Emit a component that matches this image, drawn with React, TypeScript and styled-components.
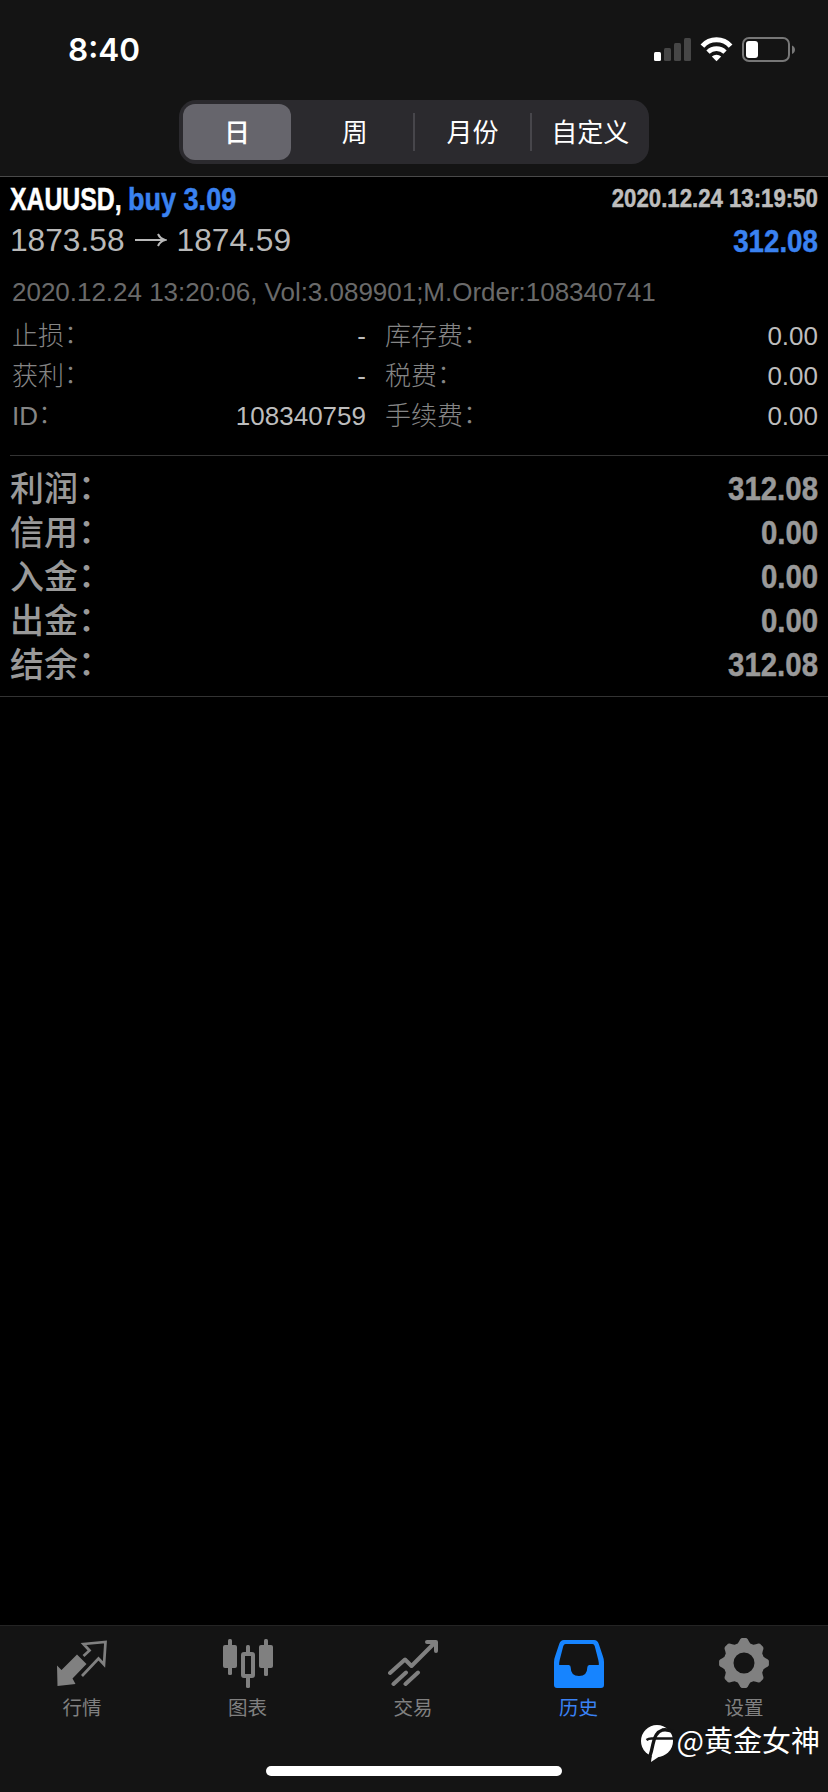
import React from "react";
import styled, { createGlobalStyle, css } from "styled-components";

const sans = `"Liberation Sans", "Noto Sans CJK SC", sans-serif`;
const cjk = `"Noto Sans CJK SC", sans-serif`;

const GlobalStyle = createGlobalStyle`
  * { box-sizing: border-box; }
  body { margin: 0; background: #000; }
`;

const Screen = styled.div`
  display: flex;
  flex-direction: column;
  width: 828px;
  height: 1792px;
  background: #000;
  overflow: hidden;
  white-space: nowrap;
`;

const Header = styled.header`
  height: 177px;
  background: #141414;
  border-bottom: 1px solid #4a4a4a;
`;

const StatusBar = styled.div`
  display: flex;
  align-items: center;
  justify-content: space-between;
  height: 100px;
  padding: 0 33px 0 68px;
`;

const Clock = styled.span`
  font: 600 31.500px/40px Inter, sans-serif;
  color: #fff;
`;

const Segmented = styled.div`
  display: flex;
  width: 470px;
  height: 64px;
  margin: 0 auto;
  padding: 4px 0 4px 4px;
  border-radius: 17px;
  background: #2b2a2e;
`;

const Segment = styled.div<{ $active?: boolean; $divided?: boolean }>`
  position: relative;
  display: flex;
  flex: 1;
  align-items: center;
  justify-content: center;
  border-radius: 12px;
  color: #fff;
  font: 400 26px/54px ${cjk};
  padding-bottom: 2px;
  ${(p) => p.$active && css`
    flex: 0 0 108px;
    margin-right: 5px;
    background: #66656c;
    font-weight: 500;
  `}
  ${(p) => p.$divided && css`
    &::before {
      content: "";
      position: absolute;
      left: -1px;
      top: 9px;
      width: 2px;
      height: 38px;
      background: #47464b;
    }
  `}
`;

const Main = styled.main`
  flex: 1;
`;

const Deal = styled.section`
  padding: 1px 10px 0;
`;

const Line = styled.div<{ $h: number }>`
  display: flex;
  align-items: center;
  justify-content: space-between;
  height: ${(p) => p.$h}px;
`;

const Title = styled.div`
  display: flex;
`;

/* Bold face squeezed horizontally to a condensed cut. */
const Condensed = styled.span<{ $size: number; $color: string; $squeeze: number; $align?: "left" | "right"; $width?: number }>`
  display: block;
  width: ${(p) => (p.$width ? `${p.$width}px` : "auto")};
  font: 700 ${(p) => p.$size}px/1.25 ${sans};
  color: ${(p) => p.$color};
  -webkit-text-stroke: 0.5px ${(p) => p.$color};
  transform: scaleX(${(p) => p.$squeeze});
  transform-origin: ${(p) => p.$align ?? "right"} center;
`;

const Prices = styled.span`
  display: flex;
  align-items: center;
  gap: 10px;
  padding-bottom: 2px;
  font: 400 31.700px/40px ${sans};
  color: #b9b9b9;
`;

const Comment = styled.div`
  padding: 12px 0 0 2px;
  font: 400 26px/36px ${sans};
  letter-spacing: -0.02px;
  color: #6a6a6a;
`;

const Details = styled.div`
  display: grid;
  grid-template-columns: 354px 433px;
  column-gap: 19px;
  grid-auto-rows: 40px;
  padding: 6px 0 0 2px;
`;

const Detail = styled.div`
  display: flex;
  align-items: center;
  justify-content: space-between;
`;

const DetailLabel = styled.span`
  font: 300 26px/40px "Liberation Sans", ${cjk};
  color: #858585;
`;

const DetailValue = styled.span`
  font: 400 26px/40px ${sans};
  color: #bdbdbd;
`;

const Colon = styled.span`
  position: relative;
  top: -2px;
`;

const Summary = styled.section`
  height: 241px;
  margin: 19px 0 0 10px;
  padding: 10px 10px 0 0;
  border-top: 1px solid #333;
`;

const Rule = styled.div`
  height: 1px;
  background: #333;
`;

const SummaryLabel = styled.span`
  padding-bottom: 3px;
  font: 500 34px/41px ${cjk};
  color: #999;
`;

const TabBar = styled.nav`
  position: relative;
  display: flex;
  flex-direction: column;
  height: 167px;
  border-top: 1px solid #242424;
  background: #141414;
`;

const Tabs = styled.div`
  display: grid;
  grid-template-columns: repeat(5, 50px);
  column-gap: 115.500px;
  padding: 12px 0 0 57px;
`;

const Tab = styled.div<{ $active?: boolean }>`
  display: flex;
  flex-direction: column;
  align-items: center;
  color: ${(p) => (p.$active ? "#1684ff" : "#808080")};
  svg { display: block; }
`;

const TabLabel = styled.span<{ $active?: boolean }>`
  margin-top: 5px;
  font: 400 19.500px/27px ${cjk};
  color: ${(p) => (p.$active ? "#3a82f5" : "#808080")};
`;

const HomeIndicator = styled.div`
  width: 296px;
  height: 10px;
  margin: 46px 0 0 266px;
  border-radius: 5px;
  background: #fff;
`;

const Watermark = styled.div`
  position: absolute;
  right: 8px;
  top: 94px;
  display: flex;
  align-items: center;
  gap: 3px;
  color: #fff;
  font: 400 29px/34px ${cjk};
  svg { position: relative; top: 4px; }
`;

const StatusIcons = () => (
  <svg width="144" height="28" viewBox="650 36 144 28">
    <rect x="653" y="52" width="7" height="9" rx="1.5" fill="#fff" />
    <rect x="663" y="48" width="7" height="13" rx="1.5" fill="#464646" />
    <rect x="673" y="43" width="7" height="18" rx="1.5" fill="#464646" />
    <rect x="683" y="38" width="7" height="23" rx="1.5" fill="#464646" />
    <path d="M701.4 46.1a19 19 0 0 1 28.2 0" fill="none" stroke="#fff" strokeWidth="5" />
    <path d="M707 52.2a12 12 0 0 1 17 0" fill="none" stroke="#fff" strokeWidth="4.6" />
    <path d="M715.5 61.2l-4.700-4.600a7 7 0 0 1 9.400 0z" fill="#fff" />
    <rect x="742" y="38" width="46" height="23" rx="6" fill="none" stroke="#777" strokeWidth="2" />
    <rect x="745" y="41" width="12" height="17" rx="3" fill="#fff" />
    <path d="M791 45.500c4 1.500 4 7 0 8.500z" fill="#777" />
  </svg>
);

const Arrow = () => (
  <svg width="32" height="16" viewBox="0 0 32 16" fill="none" stroke="#b9b9b9" strokeWidth="2">
    <path d="M0 8h30M23 2q2 4.500 7 6q-5 1.500-7 6" />
  </svg>
);

/* Tab icons share a 50px square. */
const QuotesIcon = () => (
  <svg width="50" height="50" viewBox="57 1638 50 50">
    <path fill="currentColor" d="M57 1665.500l4.500 4.500 15.500-15.500 9.500 9.500-14 14.500 3 5.500-18 2z" />
    <path fill="none" stroke="currentColor" strokeWidth="2.700" d="M83.500 1656l6-5.500-6-6.500 22-2-1.500 22.500-5.500-6L82 1676" />
  </svg>
);

const ChartIcon = () => (
  <svg width="50" height="50" viewBox="223 1638 50 50" fill="currentColor">
    <rect x="223" y="1645" width="14" height="23" rx="2" />
    <rect x="228" y="1639" width="4" height="36" rx="1.500" />
    <rect x="259" y="1645" width="14" height="23" rx="2" />
    <rect x="264" y="1639" width="4" height="37" rx="1.500" />
    <rect x="243" y="1654" width="10" height="22" rx="1" fill="none" stroke="currentColor" strokeWidth="4" />
    <rect x="246" y="1645" width="4" height="9" rx="1.500" />
    <rect x="246" y="1676" width="4" height="12" rx="1.500" />
  </svg>
);

const TradeIcon = () => (
  <svg width="50" height="50" viewBox="388 1638 50 50" fill="none" stroke="currentColor" strokeWidth="4" strokeLinecap="round" strokeLinejoin="round">
    <path d="M390 1673l15-13.500 6.500 6.500 24-24M427 1642h9v9M393.500 1684l12.500-11.500M405.500 1684l12.500-11.500" />
  </svg>
);

const HistoryIcon = () => (
  <svg width="50" height="50" viewBox="553 1638 50 50">
    <path
      fill="currentColor"
      fillRule="evenodd"
      d="M563 1640h30q3.500 0 4.800 4l4 12q1.200 3 1.200 6v23q0 3-3 3h-44q-3 0-3-3v-23q0-3 1.200-6l4-12q1.300-4 4.800-4zM564.500 1644q-1.500 0-2.200 2l-3.600 14q-.700 3-.500 5h9.500q2 0 2 2.500 0 8.500 8.300 8.500t8.300-8.500q0-2.500 2-2.500h9.500q.200-2-.500-5l-3.600-14q-.700-2-2.200-2z"
    />
  </svg>
);

const gearPath = (() => {
  const pts: string[] = [];
  for (let i = 0; i < 8; i++) {
    const profile = [[-0.31, 20.5], [-0.22, 22.2], [-0.15, 24.2], [-0.09, 25], [0.09, 25], [0.15, 24.2], [0.22, 22.2], [0.31, 20.5]];
    for (const [offset, radius] of profile) {
      const angle = (i * Math.PI) / 4 + offset;
      pts.push(`${(25 + radius * Math.sin(angle)).toFixed(2)} ${(25 - radius * Math.cos(angle)).toFixed(2)}`);
    }
  }
  return `M${pts.join("L")}Z`;
})();

const SettingsIcon = () => (
  <svg width="50" height="50" viewBox="0 0 50 50">
    <path d={`${gearPath}M35.500 25a10.500 10.500 0 1 0-21 0a10.500 10.500 0 1 0 21 0z`} fillRule="evenodd" fill="currentColor" />
  </svg>
);

const WatermarkLogo = () => (
  <svg width="33" height="38" viewBox="640 1724 33 38">
    <circle cx="656" cy="1741" r="16" fill="#fff" />
    <path fill="#fff" d="M651 1754l-1 8 9-6z" />
    <path fill="none" stroke="#141414" strokeWidth="3.400" d="M648 1759q2.500-7 4-15 2-11.500 9.500-14 4-1 10.500 1.500" />
    <path fill="none" stroke="#141414" strokeWidth="2.600" d="M645.500 1740q2-1.500 5-1.500h22" />
  </svg>
);

const details = [
  ["止损", "-", "库存费", "0.00"],
  ["获利", "-", "税费", "0.00"],
  ["ID", "108340759", "手续费", "0.00"],
];

const totals = [
  ["利润", "312.08"],
  ["信用", "0.00"],
  ["入金", "0.00"],
  ["出金", "0.00"],
  ["结余", "312.08"],
];

const tabs = [
  { label: "行情", Icon: QuotesIcon },
  { label: "图表", Icon: ChartIcon },
  { label: "交易", Icon: TradeIcon },
  { label: "历史", Icon: HistoryIcon, active: true },
  { label: "设置", Icon: SettingsIcon },
];

const DetailCell = ({ label, value }: { label: string; value: string }) => (
  <Detail>
    <DetailLabel>{label}<Colon>：</Colon></DetailLabel>
    <DetailValue>{value}</DetailValue>
  </Detail>
);

export default function App() {
  return (
    <Screen>
      <GlobalStyle />
      <Header>
        <StatusBar>
          <Clock>8:40</Clock>
          <StatusIcons />
        </StatusBar>
        <Segmented>
          <Segment $active>日</Segment>
          <Segment>周</Segment>
          <Segment $divided>月份</Segment>
          <Segment $divided>自定义</Segment>
        </Segmented>
      </Header>
      <Main>
        <Deal>
          <Line $h={42}>
            <Title>
              <Condensed $size={32} $color="#fff" $squeeze={0.775} $align="left" $width={118}>XAUUSD,</Condensed>
              <Condensed $size={32} $color="#3a82f0" $squeeze={0.845} $align="left">buy 3.09</Condensed>
            </Title>
            <Condensed $size={25.5} $color="#bdbdbd" $squeeze={0.87}>2020.12.24 13:19:50</Condensed>
          </Line>
          <Line $h={42}>
            <Prices>1873.58 <Arrow /> 1874.59</Prices>
            <Condensed $size={32} $color="#3a82f0" $squeeze={0.865}>312.08</Condensed>
          </Line>
          <Comment>2020.12.24 13:20:06, Vol:3.089901;M.Order:108340741</Comment>
          <Details>
            {details.map(([a, b, c, d]) => (
              <React.Fragment key={a}>
                <DetailCell label={a} value={b} />
                <DetailCell label={c} value={d} />
              </React.Fragment>
            ))}
          </Details>
        </Deal>
        <Summary>
          {totals.map(([label, value]) => (
            <Line $h={44} key={label}>
              <SummaryLabel>{label}<Colon>：</Colon></SummaryLabel>
              <Condensed $size={34} $color="#999" $squeeze={0.865}>{value}</Condensed>
            </Line>
          ))}
        </Summary>
        <Rule />
      </Main>
      <TabBar>
        <Tabs>
          {tabs.map(({ label, Icon, active }) => (
            <Tab key={label} $active={active}>
              <Icon />
              <TabLabel $active={active}>{label}</TabLabel>
            </Tab>
          ))}
        </Tabs>
        <HomeIndicator />
        <Watermark><WatermarkLogo />@黄金女神</Watermark>
      </TabBar>
    </Screen>
  );
}
